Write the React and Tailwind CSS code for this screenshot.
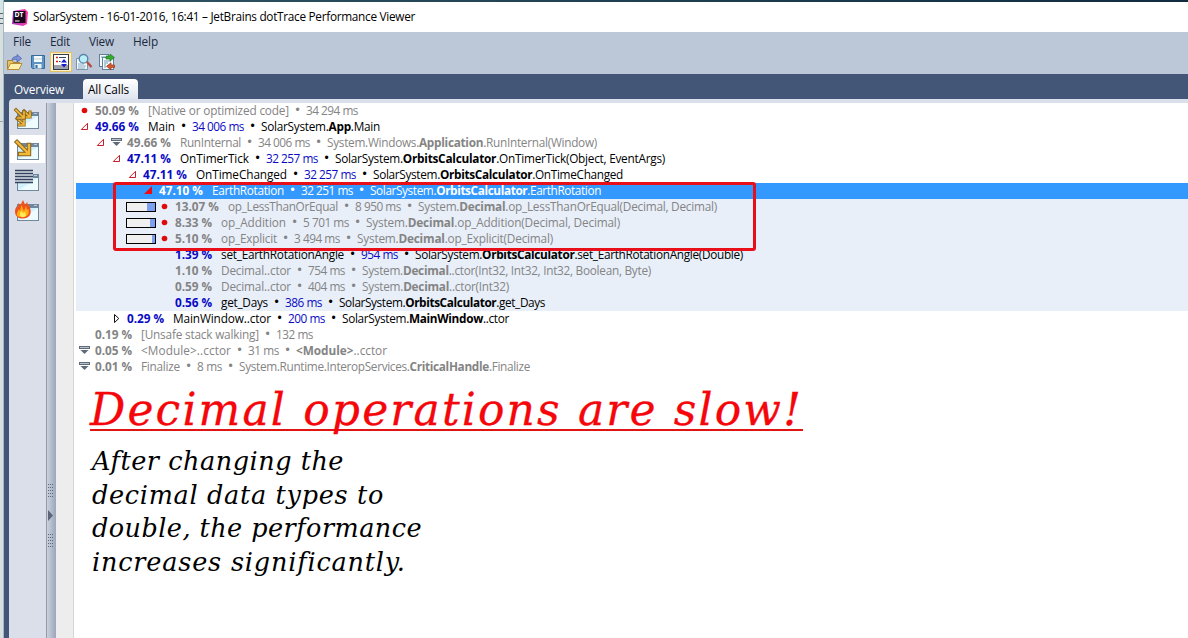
import { useLayoutEffect, useRef } from "react";

// Text run that is tracked to fill an exact width.
function Fit({ w, className = "", children }) {
  const inner = useRef(null);
  useLayoutEffect(() => {
    const el = inner.current;
    el.style.letterSpacing = "0px";
    const natural = el.getBoundingClientRect().width;
    el.style.letterSpacing = `${(w - natural) / el.textContent.length}px`;
  }, [w]);
  return (
    <span className={`block shrink-0 whitespace-pre ${className}`} style={{ width: w }}>
      <span ref={inner}>{children}</span>
    </span>
  );
}

const rows = [
  { x: 95, icon: "dot", pct: ["50.09 %", 44], name: ["[Native or optimized code]", 141], time: ["34 294 ms", 52], tone: "gray" },
  { x: 95, icon: "open", pct: ["49.66 %", 44], name: ["Main", 27], time: ["34 006 ms", 52], path: ["SolarSystem.", "App", ".Main", 119], tone: "user" },
  { x: 127, icon: "openfold", pct: ["49.66 %", 44], name: ["RunInternal", 61], time: ["34 006 ms", 52], path: ["System.Windows.", "Application", ".RunInternal(Window)", 270], tone: "gray" },
  { x: 127, icon: "open", pct: ["47.11 %", 44], name: ["OnTimerTick", 69], time: ["32 257 ms", 52], path: ["SolarSystem.", "OrbitsCalculator", ".OnTimerTick(Object, EventArgs)", 330], tone: "user" },
  { x: 143, icon: "open", pct: ["47.11 %", 44], name: ["OnTimeChanged", 91], time: ["32 257 ms", 52], path: ["SolarSystem.", "OrbitsCalculator", ".OnTimeChanged", 250], tone: "user" },
  { x: 159, icon: "solid", pct: ["47.10 %", 44], name: ["EarthRotation", 72], time: ["32 251 ms", 52], path: ["SolarSystem.", "OrbitsCalculator", ".EarthRotation", 231], tone: "selected" },
  { x: 175, icon: "dot", bar: 8, pct: ["13.07 %", 44], name: ["op_LessThanOrEqual", 110], time: ["8 950 ms", 46], path: ["System.", "Decimal", ".op_LessThanOrEqual(Decimal, Decimal)", 299], tone: "gray", tint: true },
  { x: 175, icon: "dot", bar: 5, pct: ["8.33 %", 37], name: ["op_Addition", 65], time: ["5 701 ms", 46], path: ["System.", "Decimal", ".op_Addition(Decimal, Decimal)", 254], tone: "gray", tint: true },
  { x: 175, icon: "dot", bar: 3, pct: ["5.10 %", 37], name: ["op_Explicit", 56], time: ["3 494 ms", 46], path: ["System.", "Decimal", ".op_Explicit(Decimal)", 196], tone: "gray", tint: true },
  { x: 175, pct: ["1.39 %", 37], name: ["set_EarthRotationAngle", 123], time: ["954 ms", 37], path: ["SolarSystem.", "OrbitsCalculator", ".set_EarthRotationAngle(Double)", 328], tone: "user", tint: true },
  { x: 175, pct: ["1.10 %", 37], name: ["Decimal..ctor", 70], time: ["754 ms", 37], path: ["System.", "Decimal", "..ctor(Int32, Int32, Int32, Boolean, Byte)", 289], tone: "gray", tint: true },
  { x: 175, pct: ["0.59 %", 37], name: ["Decimal..ctor", 70], time: ["404 ms", 37], path: ["System.", "Decimal", "..ctor(Int32)", 147], tone: "gray", tint: true },
  { x: 175, pct: ["0.56 %", 37], name: ["get_Days", 47], time: ["386 ms", 37], path: ["SolarSystem.", "OrbitsCalculator", ".get_Days", 206], tone: "user", tint: true },
  { x: 127, icon: "closed", pct: ["0.29 %", 37], name: ["MainWindow..ctor", 98], time: ["200 ms", 37], path: ["SolarSystem.", "MainWindow", "..ctor", 167], tone: "user" },
  { x: 95, pct: ["0.19 %", 37], name: ["[Unsafe stack walking]", 118], time: ["132 ms", 37], tone: "gray" },
  { x: 95, icon: "fold", pct: ["0.05 %", 37], name: ["<Module>..cctor", 90], time: ["31 ms", 31], path: ["", "<Module>", "..cctor", 91], tone: "gray" },
  { x: 95, icon: "fold", pct: ["0.01 %", 37], name: ["Finalize", 39], time: ["8 ms", 25], path: ["System.Runtime.InteropServices.", "CriticalHandle", ".Finalize", 291], tone: "gray" },
];

const tones = {
  gray: ["text-[#848484]", "text-[#848484]"],
  user: ["text-black", "text-[#0a0ac4]"],
  selected: ["text-white", "text-white"],
};

function Fold() {
  return (
    <svg width="16" height="16" className="shrink-0">
      <rect x="0.5" y="3.5" width="10" height="2" fill="#b9c0ca" stroke="#5f6b7b" />
      <path d="M1.5 7h8L5.5 11z" fill="#5f6b7b" />
    </svg>
  );
}

function Marker({ kind }) {
  if (kind === "dot")
    return (
      <svg width="16" height="16" className="shrink-0">
        <circle cx="5.5" cy="7.5" r="2.8" fill="#e00b0b" />
      </svg>
    );
  if (kind === "open" || kind === "openfold")
    return (
      <>
        <svg width="16" height="16" className="shrink-0">
          <path d="M2.3 10.5H8.5V4.3z" fill="#fff" stroke="#c8202a" />
        </svg>
        {kind === "openfold" && <Fold />}
      </>
    );
  if (kind === "solid")
    return (
      <svg width="16" height="16" className="shrink-0">
        <path d="M1 11H9V3z" fill="#f00a14" />
      </svg>
    );
  if (kind === "closed")
    return (
      <svg width="16" height="16" className="shrink-0">
        <path d="M3.5 3.5v8L7.8 7.5z" fill="#fff" stroke="#111" />
      </svg>
    );
  if (kind === "fold")
    return <Fold />;
  return null;
}

const Bullet = () => <span className="w-[17px] shrink-0 text-center font-['Liberation_Sans',sans-serif] text-[12px]">•</span>;

function Row({ row }) {
  const [text, accent] = tones[row.tone];
  const bg = row.tone === "selected" ? "bg-[#3399ff]" : row.tint ? "bg-[#e8eff9]" : "";
  return (
    <div className={`flex h-4 items-start text-[11.8px] leading-[15px] ${text} ${bg}`}>
      <div className="flex h-4 shrink-0 items-center justify-end" style={{ width: row.x - 76 }}>
        {row.bar && (
          <div className="mr-[3px] flex h-[10px] w-[30px] justify-end border border-black bg-[#f0f0f0]">
            <div className="h-full bg-[#7d9ff0]" style={{ width: row.bar }} />
          </div>
        )}
        <Marker kind={row.icon} />
      </div>
      <Fit w={row.pct[1]} className={`mr-[9px] font-bold ${accent}`}>{row.pct[0]}</Fit>
      <Fit w={row.name[1]}>{row.name[0]}</Fit>
      <Bullet />
      <Fit w={row.time[1]} className={accent}>{row.time[0]}</Fit>
      {row.path && (
        <>
          <Bullet />
          <Fit w={row.path[3]}>
            {row.path[0]}
            <b>{row.path[1]}</b>
            {row.path[2]}
          </Fit>
        </>
      )}
    </div>
  );
}

function WindowGlyph() {
  return (
    <g transform="translate(-3 0)">
      <rect x="5.5" y="4.5" width="21" height="16" fill="#d3f1fc" stroke="#71879b" />
      <path d="M7 20L26 8v12z" fill="#eefbff" />
      <rect x="5" y="4" width="22" height="4" fill="#71879b" />
      <path d="M22 5.5h3" stroke="#b8cbe0" />
    </g>
  );
}

// Diagonal arrow drawn as a dark outline stroke under a golden one.
function Arrow({ d, wide, thin }) {
  return (
    <>
      <path d={d} fill="none" stroke="#8c641c" strokeWidth={wide} strokeLinecap="square" />
      <path d={d} fill="none" stroke="#f0b93a" strokeWidth={thin} strokeLinecap="square" />
    </>
  );
}

function SideIcon({ kind }) {
  return (
    <svg width="30" height="24" viewBox="0 0 30 24" className="overflow-visible">
      <WindowGlyph />
      {kind === "arrow" && <Arrow d="M2 3L13 14M14 6v9H5" wide={4.4} thin={2.4} />}
      {kind === "arrows" && (
        <>
          <Arrow d="M9 3l5 5M15 4v5h-5" wide={3.2} thin={1.6} />
          <Arrow d="M2 10.5l6 5M9 11v6H4" wide={3.2} thin={1.6} />
          <Arrow d="M1 2l7 7M9 4v6H3" wide={3.4} thin={1.7} />
        </>
      )}
      {kind === "lines" && (
        <>
          <path d="M0 0h18v13H0z" fill="#dadfe9" />
          <path d="M0 .5h18M0 3.5h18M0 6.5h18M0 9.5h18M0 12.5h18" stroke="#34445c" strokeWidth="1.3" />
        </>
      )}
      {kind === "fire" && (
        <>
          <path d="M.8 15C-.8 11 .3 8 2 6l1 2.5L3.5 3l2 2L8 0l2 4.5L12.5 2v4L14 4.5c.2 2 2.5 5 1.5 9-1 4-5 5-8 5s-5.5-1-6.7-3.5z" fill="#f0521c" />
          <path d="M2 13l2-4 1 2 1.5-6 1.5 4 1 2 2-5 1 4 1.5-1c1 5-1 8-6 8s-6-1-5.5-4z" fill="#ffac16" />
          <path d="M5 14l1-3 2 2 2-1 1 3c0 3-7 3-6-1z" fill="#ffec55" />
        </>
      )}
    </svg>
  );
}

function Grip() {
  return (
    <svg width="8" height="15" shapeRendering="crispEdges">
      {[0, 3, 6, 9, 12].map((y) => (
        <path key={y} d={`M1 ${y + 0.5}h1m1 0h1m1 0h1`} stroke="#5e687c" />
      ))}
    </svg>
  );
}

function Toolbar() {
  return (
    <div className="flex h-5 items-center pl-[2px]">
      <svg width="18" height="18" viewBox="0 0 18 18">
        <path d="M1.5 16.5V7.5h5l1 2h6v2" fill="#e9c268" stroke="#a88331" />
        <path d="M1.5 16.5l3-6H16l-3 6z" fill="#fff0ae" stroke="#b68b31" />
        <path d="M6 7C6.5 4.4 8 3.3 11 3.8V1.5l4.5 4L11 9V6.6C8.5 6 7 6.3 6 7z" fill="#8094dc" stroke="#4e62ab" strokeWidth="0.8" />
      </svg>
      <svg width="16" height="16" className="ml-[6px]" viewBox="0 0 16 16">
        <path d="M1.5 1.5h13v13h-12l-1-1z" fill="#5c94c5" stroke="#356c9c" />
        <rect x="4" y="2" width="8" height="6" fill="#f7fafc" />
        <path d="M4 5h8" stroke="#bfd0dc" />
        <rect x="4.5" y="10" width="7" height="4.5" fill="#e9f1f5" />
        <rect x="5.5" y="11" width="2" height="3" fill="#356c9c" />
      </svg>
      <div className="ml-1 flex h-5 w-[22px] items-center justify-center border border-[#e5c365] bg-[#fff0c5]">
        <svg width="16" height="16" viewBox="0 0 16 16" className="shrink-0">
          <rect x="0.5" y="0.5" width="15" height="15" fill="#fff" stroke="#333c4d" />
          <rect x="1" y="11" width="14" height="4" fill="#9ea2ab" />
          <path d="M3 3.5h2M3 7.5h2" stroke="#de1717" strokeWidth="1.6" />
          <path d="M6 3.5h7M6 7.5h1.5" stroke="#34435e" />
          <path d="M8 8.5l3-3.5 3 3.5zM8 10h6l-3 3.5z" fill="#1717ce" />
        </svg>
      </div>
      <svg width="18" height="18" className="ml-1" viewBox="0 0 18 18">
        <path d="M.5 5.5h11v11H.5z" fill="#f2f8fb" stroke="#7995aa" />
        <path d="M2 11h6M2 13h8M2 15h7" stroke="#8cacc4" />
        <circle cx="7.5" cy="5.8" r="4.3" fill="#b9eefb" stroke="#5c86a7" strokeWidth="1.4" />
        <path d="M11 9l4.5 5" stroke="#b4513e" strokeWidth="2.4" />
      </svg>
      <svg width="18" height="18" className="ml-1" viewBox="0 0 18 18">
        <rect x="1.5" y="1.5" width="9" height="12" fill="#f6fbfc" stroke="#607f98" />
        <rect x="4.5" y="4.5" width="11" height="12" fill="#f6fbfc" stroke="#607f98" />
        <path d="M3 4h4M6 8h7M6 10h4M6 12h2M6 14h2" stroke="#6e99b7" />
        <path d="M8 3h4V1l4.500 3.500L12 8V6H8z" fill="#35ae2d" stroke="#207a20" strokeWidth="0.7" />
        <path d="M16.500 12H13V9.800L8.500 13.300l4.500 3.500v-2.300h3.500z" fill="#d75b2c" stroke="#9e3518" strokeWidth="0.7" />
      </svg>
    </div>
  );
}

function Logo() {
  return (
    <svg width="17" height="17" viewBox="0 0 17 17">
      <defs>
        <linearGradient id="brand" x2="1">
          <stop stopColor="#a83dc4" />
          <stop offset="1" stopColor="#ff38ac" />
        </linearGradient>
      </defs>
      <path d="M1 2L13 0l3 3-1 12-4 2-11-2z" fill="url(#brand)" />
      <rect x="1.5" y="2" width="12" height="12" fill="#160818" />
      <text x="2.4" y="8.2" fill="#fff" fontSize="6.8" fontWeight="700" fontFamily="Open Sans, sans-serif">DT</text>
      <path d="M3 12h4.5" stroke="#fff" />
    </svg>
  );
}

export default function App() {
  return (
    <div className="relative flex h-[638px] w-[1188px] overflow-hidden bg-white font-['Open_Sans','Noto_Sans',sans-serif] text-[11.8px]">
      <div className="flex w-1 shrink-0 flex-col border-r border-[#9dbbc5] bg-[#d9dfdf]">
        <div className="h-3 bg-[#d5e4e7]" />
        <div className="mt-px h-px bg-[#59636b]" />
        <div className="mt-1 h-px bg-[#59636b]" />
        <div className="mt-1 h-px bg-[#59636b]" />
        <div className="mt-[97px] h-px bg-[#9ba4a9]" />
      </div>
      <div className="flex min-w-0 grow flex-col">
        <div className="h-[2px] bg-gradient-to-r from-[#315766] to-[#102c40]" />
        <div className="flex h-[30px] shrink-0 items-center bg-white pl-2 text-black">
          <Logo />
          <Fit w={382} className="ml-1">SolarSystem - 16-01-2016, 16:41 – JetBrains dotTrace Performance Viewer</Fit>
        </div>
        <div className="h-[42px] shrink-0 bg-[#bcc7d8] text-[#1b293e]">
          <div className="flex h-5 items-center gap-[19px] pl-[9px]">
            <Fit w={18}>File</Fit>
            <Fit w={20}>Edit</Fit>
            <Fit w={25}>View</Fit>
            <Fit w={25}>Help</Fit>
          </div>
          <Toolbar />
        </div>
        <div className="flex h-[25px] shrink-0 items-end bg-[#435678] pl-[10px]">
          <div className="flex h-5 w-[69px] items-center pt-px text-white"><Fit w={50}>Overview</Fit></div>
          <div className="flex h-5 w-[55px] items-center rounded-t-sm bg-gradient-to-b from-white to-[#dfe4ee] pl-[5px] pt-px text-black"><Fit w={41}>All Calls</Fit></div>
        </div>
        <div className="flex min-h-0 grow flex-col bg-[#435678] pl-[5px]">
          <div className="h-1 shrink-0 rounded-tl-sm bg-[#dae0eb]" />
          <div className="flex min-h-0 grow">
            <div className="flex w-[37px] shrink-0 flex-col bg-[#dadfe9] pl-px">
              <div className="flex h-8 items-center pl-[5px] pt-px"><SideIcon kind="arrows" /></div>
              <div className="flex h-7 w-[35px] items-center bg-white pl-[5px] pt-1"><SideIcon kind="arrow" /></div>
              <div className="flex h-[36px] items-center pl-[5px] pt-px"><SideIcon kind="lines" /></div>
              <div className="flex h-[26px] items-center pl-[5px]"><SideIcon kind="fire" /></div>
            </div>
            <div className="flex w-[10px] shrink-0 flex-col border-l border-[#9299a8] bg-gradient-to-r from-[#cbd1dc] to-[#9ba6ba] pt-[381px]">
              <Grip />
              <svg width="8" height="35"><path d="M1 11l5 5.5L1 22z" fill="#5d6678" /></svg>
              <Grip />
            </div>
            <div className="w-[18px] shrink-0 border-r border-[#d6d6d6] bg-[#ededed]" />
            <div className="min-w-0 grow bg-white pl-[2px]">
              {rows.map((row, i) => <Row key={i} row={row} />)}
              <div className="pl-[14px] font-['DejaVu_Serif','Liberation_Serif',serif] italic">
                <div className="mt-[10px] h-[50px] w-[713px] text-[44px] leading-[50px] text-[#f5060a] [-webkit-text-stroke:0.3px_#f5060a]">
                  <div className="h-[46px] border-b-2 border-[#e11414]"><Fit w={713}>Decimal operations are slow!</Fit></div>
                </div>
                <div className="mt-[10px] pl-[2px] text-[25.5px] leading-[33.5px] text-black">
                  <Fit w={252}>After changing the</Fit>
                  <Fit w={292}>decimal data types to</Fit>
                  <Fit w={330}>double, the performance</Fit>
                  <Fit w={313}>increases significantly.</Fit>
                </div>
              </div>
            </div>
          </div>
        </div>
      </div>
      <div className="absolute left-[113px] top-[182px] h-[69px] w-[643px] rounded-[3px] border-[3px] border-[#e80f18]" />
    </div>
  );
}
